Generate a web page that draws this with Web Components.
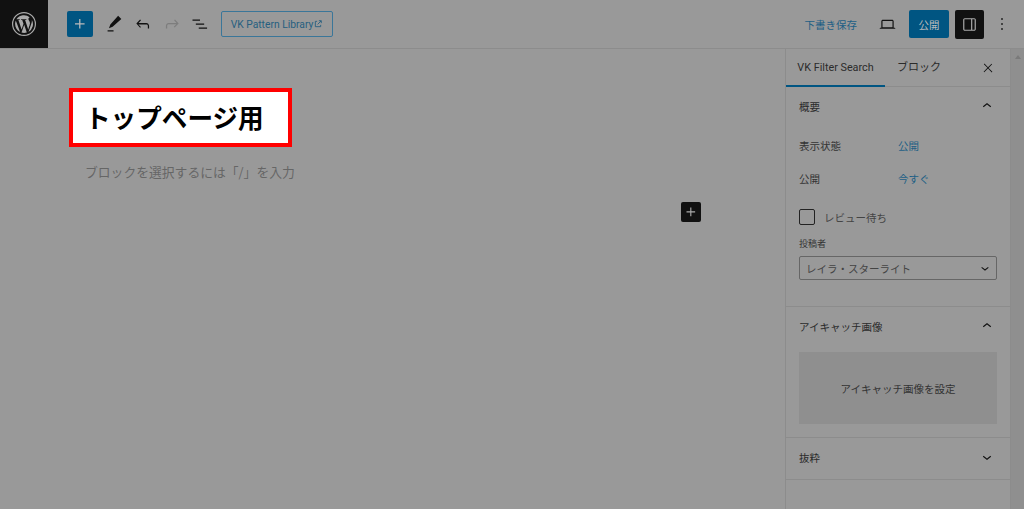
<!doctype html>
<html lang="ja">
<head>
<meta charset="utf-8">
<title>トップページ用</title>
<style>
  html, body { margin: 0; height: 100%; overflow: hidden; }
  body {
    background: #999;
    font-family: "Noto Sans CJK JP", "Noto Sans", sans-serif;
    color: #333;
  }
  wp-editor { height: 509px; }
</style>
</head>
<body>
<wp-editor>
  <wp-topbar slot="top"></wp-topbar>
  <wp-canvas slot="canvas"></wp-canvas>
  <wp-sidebar slot="side"></wp-sidebar>
</wp-editor>

<script>
/* shared icon paths (24 viewBox) */
const ICONS = {
  plus: 'M11 12.5V17.5H12.5V12.5H17.5V11H12.5V6H11V11H6V12.5H11Z',
  pen: 'M20 6.500 16.500 3 8 12.500 6.500 16.500 10.500 15 20 6.500ZM5 18.800h6.500v1.400H5z',
  undo: 'M18.300 11.700c-.6-.6-1.400-.9-2.300-.9H6.700l2.900-3.300-1.100-1-4.500 5L8.500 16.500l1-1-3-3H16c.5 0 .9.2 1.300.5.3.3.5.8.5 1.300v3.200h1.500v-3.200c0-.9-.3-1.800-1-2.400Z',
  redo: 'M15.600 6.500l-1.100 1 2.900 3.300H8c-.9 0-1.700.3-2.300.9-.7.6-1 1.500-1 2.400v3.200h1.500v-3.200c0-.5.2-1 .5-1.300.4-.3.8-.5 1.300-.5h9.200l-3 3 1 1 4.800-5-4.400-4.800Z',
  list: 'M3 6.500h9V8H3zM7 11.300h10v1.500H7zM10.500 16.300h10v1.500h-10z',
  close: 'M13 11.800l6.100-6.300-1-1-6.100 6.200-6.100-6.300-1 1 6.100 6.300-6.500 6.700 1 1 6.500-6.600 6.500 6.700 1-1-6.500-6.700Z',
  up: 'M6.500 12.400 12 8l5.500 4.400-.9 1.200L12 10l-4.500 3.600-1-1.200Z',
  down: 'M17.500 11.600 12 16l-5.500-4.400.9-1.200L12 14l4.500-3.600 1 1.200Z',
  laptop: 'M20.500 16h-.7V8c0-1.100-.9-2-2-2H6.200c-1.100 0-2 .9-2 2v8h-.7c-.8 0-1.500.7-1.500 1.500h20c0-.8-.7-1.500-1.500-1.500ZM5.700 8c0-.3.2-.5.5-.5h11.600c.3 0 .5.2.5.5v7.600H5.700V8Z',
  panel: 'M18 4H6c-1.100 0-2 .9-2 2v12c0 1.100.9 2 2 2h12c1.100 0 2-.9 2-2V6c0-1.100-.9-2-2-2Zm-4 14.500H6c-.3 0-.5-.2-.5-.5V6c0-.3.2-.5.5-.5h8v13Zm4.500-.5c0 .3-.2.5-.5.5h-2.500v-13H18c.3 0 .5.2.5.5v12Z',
  more: 'M13 19h-2v-2h2v2zm0-6h-2v-2h2v2zm0-6h-2V5h2v2z'
};

class WpIcon extends HTMLElement {
  static observedAttributes = ['name'];
  connectedCallback() { this.render(); }
  attributeChangedCallback() { this.render(); }
  render() {
    const name = this.getAttribute('name');
    if (!name) return;
    const size = this.getAttribute('size') || 24;
    if (!this.shadowRoot) this.attachShadow({ mode: 'open' });
    this.shadowRoot.innerHTML = `
      <style>
        :host { display: inline-flex; flex: none; color: inherit; }
        svg { display: block; fill: currentColor; }
      </style>
      <svg width="${size}" height="${size}" viewBox="0 0 24 24" aria-hidden="true"><path d="${ICONS[name]}"/></svg>`;
  }
}
customElements.define('wp-icon', WpIcon);

const editorTpl = document.createElement('template');
editorTpl.innerHTML = `
  <style>
    :host { display: flex; flex-direction: column; }
    .main { display: flex; flex: 1; min-height: 0; }
    ::slotted([slot="canvas"]) { flex: 1; min-width: 0; }
  </style>
  <slot name="top"></slot>
  <div class="main">
    <slot name="canvas"></slot>
    <slot name="side"></slot>
  </div>`;
class WpEditor extends HTMLElement {
  constructor() {
    super();
    this.attachShadow({ mode: 'open' }).appendChild(editorTpl.content.cloneNode(true));
  }
}
customElements.define('wp-editor', WpEditor);

const topbarTpl = document.createElement('template');
topbarTpl.innerHTML = `
  <style>
    :host { display: flex; align-items: center; height: 48px; border-bottom: 1px solid #8c8c8c; font-size: 10.5px; color: #111; }
    .logo { width: 48px; height: 48px; background: #111; display: flex; align-items: center; justify-content: center; color: #aaa; }
    .left { display: flex; align-items: center; margin-left: 19px; }
    .add { width: 26px; height: 26px; border-radius: 2px; background: #005582; color: #bbb; display: flex; align-items: center; justify-content: center; }
    .tool { width: 24px; display: flex; justify-content: center; color: #111; }
    .tool.off { color: #7d7d7d; }
    .lib { margin-left: 9px; width: 112px; height: 26px; box-sizing: border-box; border: 1px solid #3a7699; border-radius: 2px; color: #265f80; display: flex; align-items: center; justify-content: center; white-space: nowrap; font-family: Roboto, sans-serif; font-size: 10.3px; padding-right: 1px; }
    .lib svg { margin-left: 1px; }
    .right { margin-left: auto; display: flex; align-items: center; }
    .save { color: #1d5f85; margin-right: 21px; }
    .pub { width: 40px; height: 28px; margin: 0 6px 0 12px; border-radius: 2px; background: #005582; color: #bbb; display: flex; align-items: center; justify-content: center; }
    .panel { width: 29px; height: 29px; border-radius: 2px; background: #111; color: #aaa; display: flex; align-items: center; justify-content: center; }
    .more { width: 25px; display: flex; justify-content: center; margin: 0 10px 0 5px; }
  </style>
  <div class="logo">
    <svg width="24" height="24" viewBox="0 0 24 24" fill="currentColor" aria-label="WordPress"><path d="M12 0a12 12 0 1 0 0 24 12 12 0 0 0 0-24Zm0 1.200A10.800 10.800 0 1 1 12 22.800 10.800 10.800 0 0 1 12 1.200ZM3.100 12c0 3.500 2 6.600 5 8L3.800 8.400A8.900 8.900 0 0 0 3.100 12Zm14.900-.4c0-1.100-.4-1.900-.7-2.500-.5-.7-.9-1.300-.9-2 0-.8.6-1.500 1.400-1.500h.1A8.900 8.900 0 0 0 4.400 7.300h.6c.9 0 2.400-.1 2.400-.1.500 0 .5.700 0 .8 0 0-.5.1-1 .1l3.200 9.400 1.900-5.700-1.300-3.700-.9-.1c-.5 0-.4-.8 0-.8 0 0 1.500.1 2.400.1s2.400-.1 2.400-.1c.5 0 .5.700 0 .8 0 0-.5.1-1 .1l3.100 9.400.9-2.900c.4-1.200.7-2 .7-2.700ZM12.200 12.800l-2.700 7.800a8.900 8.900 0 0 0 5.400-.1l-.1-.1-2.600-7.600ZM19.800 7.800c0 .3.100.6.100 1 0 .9-.2 1.900-.7 3.200l-2.700 7.900a8.900 8.900 0 0 0 3.300-12.100Z"/></svg>
  </div>
  <div class="left">
    <div class="add"><wp-icon name="plus" size="20"></wp-icon></div>
    <div class="tool" style="margin-left:9px"><wp-icon name="pen" size="22"></wp-icon></div>
    <div class="tool" style="margin-left:5px"><wp-icon name="undo" size="20"></wp-icon></div>
    <div class="tool off" style="margin-left:5px"><wp-icon name="redo" size="20"></wp-icon></div>
    <div class="tool" style="margin-left:4px"><wp-icon name="list" size="20"></wp-icon></div>
    <div class="lib">VK Pattern Library<svg width="8" height="8" viewBox="0 0 9 9" fill="none" stroke="currentColor"><path d="M3.500 1.500H1.500v6h6v-2M4 5l4-4M5.500 .8h2.700v2.700"/></svg></div>
  </div>
  <div class="right">
    <span class="save">下書き保存</span>
    <wp-icon name="laptop" size="19"></wp-icon>
    <div class="pub">公開</div>
    <div class="panel"><wp-icon name="panel" size="19"></wp-icon></div>
    <div class="more"><wp-icon name="more" size="20"></wp-icon></div>
  </div>`;
class WpTopbar extends HTMLElement {
  constructor() {
    super();
    this.attachShadow({ mode: 'open' }).appendChild(topbarTpl.content.cloneNode(true));
  }
}
customElements.define('wp-topbar', WpTopbar);

const canvasTpl = document.createElement('template');
canvasTpl.innerHTML = `
  <style>
    :host { display: block; position: relative; padding: 39px 0 0 69px; }
    .title { width: 223px; height: 59px; box-sizing: border-box; border: 4px solid #f00; background: #fff; color: #000; font-size: 25.6px; font-weight: 700; line-height: 49px; padding-left: 12px; white-space: nowrap; }
    .hint { margin: 16px 0 0 16px; font-size: 12.8px; line-height: 18px; color: #666; white-space: nowrap; }
    .add { position: absolute; left: 681px; top: 153px; width: 20px; height: 20px; border-radius: 2px; background: #111; color: #aaa; display: flex; align-items: center; justify-content: center; }
  </style>
  <div class="title">トップページ用</div>
  <div class="hint">ブロックを選択するには「/」を入力</div>
  <div class="add"><wp-icon name="plus" size="18"></wp-icon></div>`;
class WpCanvas extends HTMLElement {
  constructor() {
    super();
    this.attachShadow({ mode: 'open' }).appendChild(canvasTpl.content.cloneNode(true));
  }
}
customElements.define('wp-canvas', WpCanvas);

/* collapsible-looking panel section */
const panelTpl = document.createElement('template');
panelTpl.innerHTML = `
  <style>
    :host { display: block; border-bottom: 1px solid #8c8c8c; font-size: 10.5px; color: #333; }
    .head { height: 41px; box-sizing: border-box; display: flex; align-items: center; justify-content: space-between; padding: 0 14px 3px 13px; color: #2b2b2b; }
    .body { padding: 0 13px; }
    wp-icon { color: #111; }
  </style>
  <div class="head"><span id="t"></span><wp-icon id="i" size="18"></wp-icon></div>
  <div class="body"><slot></slot></div>`;
class WpPanel extends HTMLElement {
  constructor() {
    super();
    this.attachShadow({ mode: 'open' }).appendChild(panelTpl.content.cloneNode(true));
  }
  connectedCallback() {
    this.shadowRoot.getElementById('t').textContent = this.getAttribute('label');
    this.shadowRoot.getElementById('i').setAttribute('name', this.hasAttribute('closed') ? 'down' : 'up');
  }
}
customElements.define('wp-panel', WpPanel);

const rowTpl = document.createElement('template');
rowTpl.innerHTML = `
  <style>
    :host { display: flex; align-items: center; height: 33px; white-space: nowrap; }
    .k { width: 99px; color: #333; }
    .v { color: #1d5f85; }
  </style>
  <span class="k"><slot name="k"></slot></span><span class="v"><slot></slot></span>`;
class WpRow extends HTMLElement {
  constructor() {
    super();
    this.attachShadow({ mode: 'open' }).appendChild(rowTpl.content.cloneNode(true));
  }
}
customElements.define('wp-row', WpRow);

const sidebarTpl = document.createElement('template');
sidebarTpl.innerHTML = `
  <style>
    :host { display: flex; width: 239px; height: 460px; box-sizing: border-box; border-left: 1px solid #8c8c8c; }
    .col { width: 225px; flex: none; border-right: 1px solid #8c8c8c; box-sizing: border-box; }
    .scroll { flex: 1; background: #8f8f8f; display: flex; justify-content: center; padding-top: 6px; }
    .scroll i { width: 0; height: 0; border: 3px solid transparent; border-top: 0; border-bottom: 4px solid #7a7a7a; }
    .tabs { height: 37px; display: flex; border-bottom: 1px solid #8c8c8c; font-size: 10.5px; }
    .tab { width: 99px; height: 38px; box-sizing: border-box; display: flex; align-items: center; justify-content: center; color: #2b2b2b; white-space: nowrap; }
    .tab.on { border-bottom: 2px solid #005582; font-family: Roboto, sans-serif; font-size: 10.8px; }
    .tab.two { width: 68px; padding-bottom: 5px; font-size: 11px; }
    .x { margin-left: auto; margin-right: 15px; display: flex; align-items: center; color: #111; }
    .sum { padding-bottom: 26px; }
    .check { display: flex; align-items: center; gap: 9px; height: 20px; margin-top: 12px; color: #444; }
    .check i { width: 14px; height: 14px; border: 1px solid #222; border-radius: 2px; }
    .lab { margin-top: 10px; font-size: 9px; line-height: 13px; color: #333; }
    .sel { height: 24px; margin-top: 6px; box-sizing: border-box; border: 1px solid #666; border-radius: 2px; display: flex; align-items: center; justify-content: space-between; padding: 0 3px 0 6px; color: #444; }
    .sel wp-icon { color: #111; }
    .img { height: 72px; margin: 4px 0 13px; background: #8f8f8f; display: flex; align-items: center; justify-content: center; color: #333; }
  </style>
  <div class="col">
    <div class="tabs">
      <div class="tab on">VK Filter Search</div>
      <div class="tab two">ブロック</div>
      <div class="x"><wp-icon name="close" size="14"></wp-icon></div>
    </div>
    <wp-panel label="概要">
      <div style="margin-top:1px">
        <wp-row><span slot="k">表示状態</span>公開</wp-row>
        <wp-row><span slot="k">公開</span>今すぐ</wp-row>
      </div>
      <div class="check"><i></i>レビュー待ち</div>
      <div class="lab">投稿者</div>
      <div class="sel">レイラ・スターライト<wp-icon name="down" size="16"></wp-icon></div>
      <div class="sum"></div>
    </wp-panel>
    <wp-panel label="アイキャッチ画像">
      <div class="img">アイキャッチ画像を設定</div>
    </wp-panel>
    <wp-panel label="抜粋" closed></wp-panel>
  </div>
  <div class="scroll"><i></i></div>`;
class WpSidebar extends HTMLElement {
  constructor() {
    super();
    this.attachShadow({ mode: 'open' }).appendChild(sidebarTpl.content.cloneNode(true));
  }
}
customElements.define('wp-sidebar', WpSidebar);
</script>
</body>
</html>
